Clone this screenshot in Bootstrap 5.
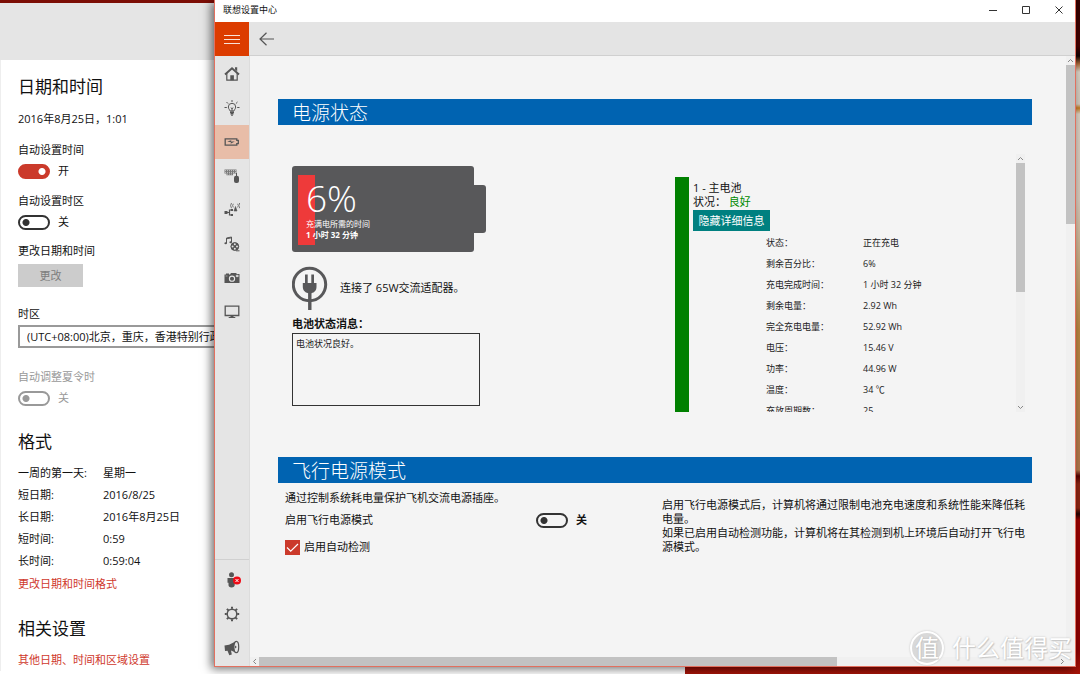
<!DOCTYPE html>
<html lang="zh-CN">
<head>
<meta charset="utf-8">
<meta name="viewport" content="width=device-width, initial-scale=1">
<title>联想设置中心</title>
<link href="https://cdn.jsdelivr.net/npm/bootstrap@5.3.0/dist/css/bootstrap.min.css" rel="stylesheet">
<script src="https://cdn.jsdelivr.net/npm/bootstrap@5.3.0/dist/js/bootstrap.bundle.min.js"></script>
<style>
body{font-family:"Open Sans","Noto Sans CJK SC",sans-serif;font-size:11px;line-height:22px;color:#111;height:100vh;overflow:hidden;
  background:linear-gradient(180deg,#300 0,#400 46px,#100 56px,#a96a3a 64px,#d8d0c4 72px,#cfc6ba 104px,#c27a22 108px,#d8cdc0 114px,#d5c8ba 200px,#b8843f 330px,#b0754a 470px,#500 476px,#8a2412 484px,#8a2412 508px,#200 514px,#900 520px,#8c0000 650px,#a51408 100%)}
h2{font-size:17px;line-height:24px;font-weight:400}
a{color:#cf382c;text-decoration:none}
button{border:0;padding:0}
/* settings window */
.settings-win{left:0;top:0;bottom:0;width:685px;border-top:3px solid #7c0d05;background:#fff}
.settings-head{height:57px;background:#e5e5e5}
.settings-body{padding:15px 0 0 17px;border-left:1px solid #eee}
.line-20{height:20px}
.toggle{appearance:none;width:32px;height:15px;margin:0;border:2px solid #333;border-radius:8px;background:radial-gradient(circle at 6px 50%,#333 3px,transparent 4px)}
.toggle:checked{border-color:#cb3a2b;background:radial-gradient(circle at 22px 50%,#fff 3px,#cb3a2b 4px)}
.toggle:disabled{border-color:#999;background:radial-gradient(circle at 6px 50%,#999 3px,transparent 4px)}
.btn-change{width:65px;height:23px;margin-top:2px;background:#ccc;color:#7d7d7d}
.zone{appearance:none;width:300px;height:23px;border:2px solid #999;background:#fff;padding:0 7px;font-size:11px;line-height:18px;color:#111}
.muted{color:#999}
.formats th{width:85px;font-weight:400;padding:0}
.formats td{padding:0}
.formats{margin-bottom:1px}
.mt-a{margin-top:9px}.mt-b{margin-top:8px}.mt-c{margin-top:16px}.mt-d{margin-top:22px}.mt-e{margin-top:18px}
/* application window */
.app-win{left:214px;right:4px;top:0;bottom:7px;border:1px solid #e2705f;border-top:0;background:#f4f4f4;box-shadow:-3px 2px 9px rgba(0,0,0,.55)}
.title-row{height:22px;background:#fff;font-size:9px;line-height:20px;padding-left:8px}
.caption-btn{width:33px;height:20px;background:none}
.bar-row{height:34px;background:#e4e4e4;border-bottom:1px solid #d0d0d0}
.tile{width:34px;height:34px;background:none;color:#555}
.tile-menu{background:#dc3c00;color:#fff}
.tile-on{background:#e8bda8}
.rail{width:35px;background:#e5e5e5;border-right:1px solid #dcdcdc;padding-top:1px}
.rail-foot{border-top:1px solid #d0d0d0;padding:3px 0 1px}
.page{padding:43px 34px 0 28px}
.section-bar{height:26px;background:#0063b1;color:#fff;font-size:19px;line-height:28px;font-weight:300;padding-left:14px;margin:0}
.power-row{padding-top:29px;margin-bottom:45px}
.power-left{padding:12px 0 0 14px}
.cell{width:182px;height:86px;border-radius:3px;background:#58585a;color:#fff;padding:9px 6px}
.cell-tip{width:12px;height:48px;border-radius:0 3px 3px 0;background:#58585a}
.cell-level{width:17px;height:70px;background:#ee3a3a}
.cell-text{left:14px;top:12px;font-size:8px;line-height:11px;white-space:nowrap}
.cell-pct{font-size:37px;line-height:40px;font-weight:300}
.adapter{padding-top:14px}
.msg-label{padding-top:5px;line-height:18px}
.msg{width:188px;height:73px;border:1px solid #333;background:none;padding:0 3px;font-size:9px;line-height:19px;resize:none;color:#222}
.row-14{line-height:14px}
.pack-list{height:258px;margin:0 7px 0 20px}
.pack{margin-top:23px}
.pack-gauge{width:14px;background:#008000}
.good{color:#008a00}
.btn-detail{width:77px;height:21px;margin-top:1px;background:#008080;color:#fff;line-height:20px}
.details{margin:1px 0 0 73px;font-size:9px;line-height:21px;color:#222}
.details th{width:97px;font-weight:400;padding:0}
.details td{padding:0}
.flight{padding:4px 7px 0}
.flight-label{width:251px}
.flight-row{padding-top:5px}
.flight-note{padding:15px 0 0 7px}
.flight-check{appearance:none;width:15px;height:15px;margin:0;background:#cb3a2b url("data:image/svg+xml,%3Csvg xmlns='http://www.w3.org/2000/svg' viewBox='0 0 15 15'%3E%3Cpath d='M2 7.5l3.7 3.7L13 4' fill='none' stroke='white' stroke-width='1.2'/%3E%3C/svg%3E")}
/* scroll bars */
.vbar,.hbar{background:#f0f0f0;flex:none}
.vbar{width:9px}.hbar{height:9px}
.thumb{background:#c2c2c2}
.arrow{width:9px;height:9px;flex:none;display:block}
.brand{right:8px;bottom:9px;color:#fff;font-size:24px;line-height:34px;text-shadow:0 0 2px #bbb,1px 1px 1px #ccc}
.brand-dot{width:34px;height:34px;border-radius:50%;border:2px solid #fff;background:#d9d9d9;line-height:30px;box-shadow:0 0 2px #bbb}
</style>
</head>
<body>
<section class="settings-win position-absolute overflow-hidden">
  <div class="settings-head"></div>
  <div class="settings-body">
    <h2 class="m-0">日期和时间</h2>
    <div class="mt-a">2016年8月25日，1:01</div>
    <label class="d-block mt-a" for="autoTime">自动设置时间</label>
    <div class="line-20 d-flex align-items-center gap-2"><input class="toggle" type="checkbox" role="switch" id="autoTime" checked><span>开</span></div>
    <label class="d-block mt-a" for="autoZone">自动设置时区</label>
    <div class="line-20 d-flex align-items-center gap-2"><input class="toggle" type="checkbox" role="switch" id="autoZone"><span>关</span></div>
    <div class="mt-b">更改日期和时间</div>
    <button class="btn-change d-block" type="button" disabled>更改</button>
    <label class="d-block mt-c" for="zone">时区</label>
    <select class="zone d-block" id="zone"><option>(UTC+08:00)北京，重庆，香港特别行政区，乌鲁木齐</option></select>
    <label class="d-block mt-e muted" for="dst">自动调整夏令时</label>
    <div class="line-20 d-flex align-items-center gap-2 muted"><input class="toggle" type="checkbox" role="switch" id="dst" disabled><span>关</span></div>
    <h2 class="mt-d mb-2">格式</h2>
    <table class="formats">
      <tr><th>一周的第一天:</th><td>星期一</td></tr>
      <tr><th>短日期:</th><td>2016/8/25</td></tr>
      <tr><th>长日期:</th><td>2016年8月25日</td></tr>
      <tr><th>短时间:</th><td>0:59</td></tr>
      <tr><th>长时间:</th><td>0:59:04</td></tr>
    </table>
    <a class="d-block" href="#">更改日期和时间格式</a>
    <h2 class="mt-d mb-2">相关设置</h2>
    <a class="d-block" href="#">其他日期、时间和区域设置</a>
  </div>
</section>

<main class="app-win position-absolute d-flex flex-column">
  <div class="title-row d-flex">
    <span class="flex-grow-1">联想设置中心</span>
    <button class="caption-btn d-flex align-items-center justify-content-center" type="button" aria-label="最小化"><svg width="8" height="8"><path d="M0 4.5h8" stroke="#333"/></svg></button>
    <button class="caption-btn d-flex align-items-center justify-content-center" type="button" aria-label="最大化"><svg width="8" height="8"><path d="M.5.5h7v7h-7z" fill="none" stroke="#333"/></svg></button>
    <button class="caption-btn d-flex align-items-center justify-content-center" type="button" aria-label="关闭"><svg width="8" height="8"><path d="M.5.5l7 7m0-7l-7 7" stroke="#333"/></svg></button>
  </div>
  <div class="bar-row d-flex">
    <button class="tile tile-menu d-flex align-items-center justify-content-center" type="button" aria-label="菜单"><svg width="16" height="10" stroke="#fff" opacity=".85"><path d="M0 1.5h16M0 5.5h16M0 9.5h16"/></svg></button>
    <button class="tile d-flex align-items-center justify-content-center" type="button" aria-label="返回"><svg width="15" height="14" fill="none" stroke="#555" stroke-width="1.2"><path d="M15 7H1M7.5 .7L1 7l6.500 6.300"/></svg></button>
  </div>
  <div class="d-flex flex-grow-1 overflow-hidden">
    <nav class="rail d-flex flex-column flex-shrink-0">
      <button class="tile d-flex align-items-center justify-content-center" type="button" aria-label="主页"><svg width="16" height="16" viewBox="0 0 16 16"><path d="M2.800 7v7.200h10.400V7" fill="none" stroke="currentColor" stroke-width="1.200"/><path d="M1 8.500L8 2.200l7 6.300" fill="none" stroke="currentColor" stroke-width="1.900"/><path d="M11 1.200h2.200v4L11 3.500zM6.300 9.200h3.600v5H6.300z" fill="currentColor"/></svg></button>
      <button class="tile d-flex align-items-center justify-content-center" type="button" aria-label="灯光"><svg width="16" height="16" viewBox="0 0 16 16" fill="none" stroke="currentColor"><path d="M6 11c0-1.300-1.700-2-1.700-4a3.700 3.700 0 0 1 7.400 0c0 2-1.700 2.700-1.700 4z"/><path d="M6 12.200h4M6.500 13.700h3" stroke-width="1.500"/><path d="M7 15.200h2M8 0v2M2.500 2l1.600 1.600M13.500 2l-1.600 1.600M.5 7.500h2.300M13.200 7.500h2.300M7 7.500l1 1.500 1-1.500M8 9v2"/></svg></button>
      <button class="tile tile-on d-flex align-items-center justify-content-center" type="button" aria-label="电源"><svg width="16" height="16" viewBox="0 0 16 16" fill="none" stroke="currentColor"><path d="M1.200 4.800h11.600v1.500h1.500v3.400h-1.500v1.500H1.200z" stroke-width="1.300"/><path d="M3.200 7.500L7.300 6.200l-.3 1.300h3.800L6.600 9.700 7 8.300z" fill="currentColor" stroke="none"/></svg></button>
      <button class="tile d-flex align-items-center justify-content-center" type="button" aria-label="输入设备"><svg width="16" height="16" viewBox="0 0 16 16"><path d="M.5 1.500h12v4H9v1.800H2.500V5.500h-2z" fill="currentColor" opacity=".75"/><path d="M1 2.600h11M1 4.400h11M3 6.100h5" stroke="#e5e5e5" stroke-width=".7" stroke-dasharray="1 1"/><path d="M12.500 5v3" stroke="currentColor"/><rect x="10" y="7.800" width="5" height="7.200" rx="2" fill="currentColor"/></svg></button>
      <button class="tile d-flex align-items-center justify-content-center" type="button" aria-label="网络"><svg width="16" height="16" viewBox="0 0 16 16" fill="none" stroke="currentColor"><path d="M.5 9h3v3h-3z" fill="currentColor" stroke="none"/><path d="M3 10.500h2.500M8 8H5.500v5H8" stroke-width="1.200"/><path d="M6.800 6.900H9v2.200H6.800zM6.800 11.900H9v2.200H6.800z" fill="currentColor" stroke="none"/><path d="M10 9l1.500-4.500L13 9z" fill="currentColor" stroke-width=".6"/><path d="M9.300 1.800a3 3 0 0 0 0 3.600M13.700 1.800a3 3 0 0 1 0 3.600M7.500 1a4.500 4.500 0 0 0 0 5.200M15.300 1a4.500 4.500 0 0 1 0 5.200" stroke-width=".8"/></svg></button>
      <button class="tile d-flex align-items-center justify-content-center" type="button" aria-label="音频和视频"><svg width="16" height="16" viewBox="0 0 16 16" fill="none" stroke="currentColor"><path d="M2.500 7V2l5-1v5M2.500 2.800l5-1" /><ellipse cx="1.700" cy="7.200" rx="1.300" ry="1" fill="currentColor" stroke="none"/><ellipse cx="6.700" cy="6.200" rx="1.300" ry="1" fill="currentColor" stroke="none"/><circle cx="10.800" cy="10.500" r="3.900" fill="currentColor"/><g fill="#e5e5e5" stroke="none"><circle cx="10.800" cy="8.300" r="1"/><circle cx="8.600" cy="10.500" r="1"/><circle cx="13" cy="10.500" r="1"/><circle cx="10.800" cy="12.700" r="1"/></g><path d="M12 14.800h3.500"/></svg></button>
      <button class="tile d-flex align-items-center justify-content-center" type="button" aria-label="摄像头"><svg width="16" height="16" viewBox="0 0 16 16"><path d="M.5 4.500H2V3.500h3v1h1L7 3h5l1 1h2.500v9H.5z" fill="currentColor"/><circle cx="8" cy="8.700" r="2.600" fill="none" stroke="#e5e5e5" stroke-width="1.100"/><path d="M12.200 5.200h2v1.500h-2zM1.500 6h2" stroke="#e5e5e5" stroke-width=".5" fill="#e5e5e5"/></svg></button>
      <button class="tile d-flex align-items-center justify-content-center" type="button" aria-label="显示"><svg width="16" height="16" viewBox="0 0 16 16"><path d="M1.200 2.200h13.600v9.300H1.200z" fill="none" stroke="currentColor" stroke-width="1.300"/><path d="M6.500 11.500h3v1.500h1.800v1H4.700v-1h1.800z" fill="currentColor"/></svg></button>
      <div class="rail-foot mt-auto">
        <button class="tile d-flex align-items-center justify-content-center" type="button" aria-label="账户"><svg width="18" height="16" viewBox="0 0 18 16"><circle cx="8.500" cy="2.800" r="2.500" fill="currentColor"/><path d="M4.500 6h8.200v4.800h-1V13c0 1.500-1 2.500-3.100 2.500S5.500 14.500 5.500 13v-2.200h-1z" fill="currentColor"/><circle cx="14" cy="8.500" r="4" fill="#f00b16"/><path d="M12.500 7l3 3m0-3l-3 3" stroke="#fff"/></svg></button>
        <button class="tile d-flex align-items-center justify-content-center" type="button" aria-label="设置"><svg width="16" height="16" viewBox="0 0 16 16" fill="none" stroke="currentColor"><circle cx="8" cy="8" r="4.800" stroke-width="1.500"/><path d="M8 .8v2M8 13.200v2M.8 8h2M13.200 8h2M2.900 2.900l1.500 1.500M11.600 11.600l1.500 1.500M2.900 13.100l1.500-1.500M11.600 4.400l1.500-1.500" stroke-width="2"/></svg></button>
        <button class="tile d-flex align-items-center justify-content-center" type="button" aria-label="通知"><svg width="16" height="16" viewBox="0 0 16 16"><path d="M.5 5.500L5 4.700 12 1.200v11.500L7 10.500l.8 4-2.500.8L3.500 10.800l-2.500.3z" fill="currentColor"/><ellipse cx="12.300" cy="7" rx="2.400" ry="5.700" fill="#e5e5e5" stroke="currentColor" stroke-width="1.200"/><path d="M11 5.500v3l1.800-1.500z" fill="currentColor"/></svg></button>
      </div>
    </nav>
    <div class="flex-grow-1 d-flex flex-column overflow-hidden">
      <div class="d-flex flex-grow-1 overflow-hidden">
        <div class="page flex-grow-1">
          <h1 class="section-bar">电源状态</h1>
          <div class="power-row row g-0">
            <div class="col-6 power-left">
              <div class="d-flex align-items-center">
                <div class="cell position-relative">
                  <div class="cell-level"></div>
                  <div class="cell-text position-absolute"><div class="cell-pct">6%</div><div>充满电所需的时间</div><div class="fw-bold">1 小时 32 分钟</div></div>
                </div>
                <div class="cell-tip"></div>
              </div>
              <div class="adapter d-flex gap-2 align-items-center">
                <svg width="40" height="44" viewBox="0 0 40 44"><circle cx="17.500" cy="18.500" r="16.200" fill="none" stroke="#58585a" stroke-width="3"/><path d="M13 8.500h2.700V17h3.600V8.500H22V17h2.500v3.500c0 4-2 6-5 6.700V44h-3.400V27.200c-3-.7-5.300-2.700-5.300-6.700V17H13z" fill="#58585a"/></svg>
                <span>连接了 65W交流适配器。</span>
              </div>
              <label class="msg-label d-block fw-bold" for="msg">电池状态消息：</label>
              <textarea class="msg d-block" id="msg" readonly>电池状况良好。</textarea>
            </div>
            <div class="col-6">
              <div class="pack-list d-flex overflow-hidden">
                <div class="pack d-flex gap-1 flex-grow-1">
                  <div class="pack-gauge"></div>
                  <div class="row-14 pt-1">
                    <div>1 - 主电池</div>
                    <div>状况： <span class="good">良好</span></div>
                    <button class="btn-detail d-block" type="button">隐藏详细信息</button>
                    <table class="details">
                      <tr><th>状态：</th><td>正在充电</td></tr>
                      <tr><th>剩余百分比：</th><td>6%</td></tr>
                      <tr><th>充电完成时间：</th><td>1 小时 32 分钟</td></tr>
                      <tr><th>剩余电量：</th><td>2.92 Wh</td></tr>
                      <tr><th>完全充电电量：</th><td>52.92 Wh</td></tr>
                      <tr><th>电压：</th><td>15.46 V</td></tr>
                      <tr><th>功率：</th><td>44.96 W</td></tr>
                      <tr><th>温度：</th><td>34 ℃</td></tr>
                      <tr><th>充放周期数：</th><td>25</td></tr>
                    </table>
                  </div>
                </div>
                <div class="vbar d-flex flex-column">
                  <svg class="arrow" viewBox="0 0 9 9"><path d="M2 6l2.500-2.500L7 6" fill="none" stroke="#888"/></svg>
                  <div class="thumb h-50"></div>
                  <svg class="arrow mt-auto" viewBox="0 0 9 9"><path d="M2 3l2.500 2.500L7 3" fill="none" stroke="#888"/></svg>
                </div>
              </div>
            </div>
          </div>
          <h1 class="section-bar">飞行电源模式</h1>
          <div class="row g-0">
            <div class="col-6 flight">
              <div>通过控制系统耗电量保护飞机交流电源插座。</div>
              <div class="d-flex align-items-center"><label class="flight-label" for="flight">启用飞行电源模式</label><input class="toggle me-2" type="checkbox" role="switch" id="flight"><span class="fw-bold">关</span></div>
              <div class="flight-row d-flex align-items-center gap-1"><input class="flight-check" type="checkbox" id="detect" checked><label for="detect">启用自动检测</label></div>
            </div>
            <div class="col-6 flight-note row-14">启用飞行电源模式后，计算机将通过限制电池充电速度和系统性能来降低耗电量。<br>如果已启用自动检测功能，计算机将在其检测到机上环境后自动打开飞行电源模式。</div>
          </div>
        </div>
        <div class="vbar d-flex flex-column">
          <svg class="arrow" viewBox="0 0 9 9"><path d="M2 6l2.500-2.500L7 6" fill="none" stroke="#888"/></svg>
          <div class="thumb" style="height:26.500%"></div>
        </div>
      </div>
      <div class="hbar d-flex">
        <svg class="arrow" viewBox="0 0 9 9"><path d="M6 2L3.500 4.500 6 7" fill="none" stroke="#888"/></svg>
        <div class="thumb" style="width:70%"></div>
        <svg class="arrow ms-auto me-2" viewBox="0 0 9 9"><path d="M3 2l2.500 2.500L3 7" fill="none" stroke="#888"/></svg>
      </div>
    </div>
  </div>
</main>
<div class="brand position-absolute d-flex gap-2"><span class="brand-dot text-center">值</span><span>什么值得买</span></div>
</body>
</html>
